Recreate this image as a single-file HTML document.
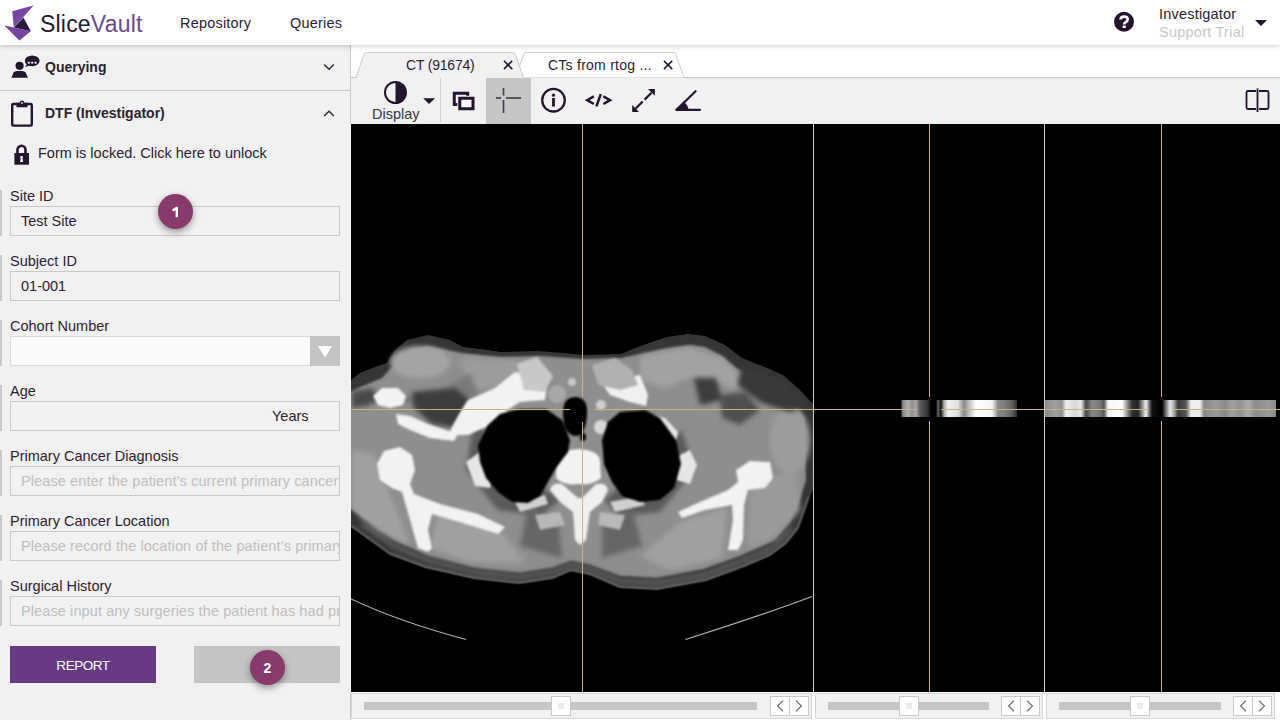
<!DOCTYPE html>
<html><head><meta charset="utf-8">
<style>
*{box-sizing:border-box;margin:0;padding:0}
html,body{width:1280px;height:720px;overflow:hidden;background:#fff;font-family:"Liberation Sans",sans-serif;color:#2b2233}
.a{position:absolute}
#hdr{left:0;top:0;width:1280px;height:45px;background:#fff;z-index:5;box-shadow:0 1px 5px rgba(0,0,0,.22)}
#side{left:0;top:45px;width:351px;height:675px;background:#f1f1f1}
.lbl{font-size:14.5px;color:#2b2233;left:10px;white-space:nowrap}
.inp{left:10px;width:330px;height:30px;border:1px solid #c9c9c9;background:#f1f1f1}
.gbar{left:0;width:2px;background:#c9c9c9}
.ph{font-size:14.5px;letter-spacing:0.1px;color:#bfbfbf;white-space:nowrap;overflow:hidden}
.badge{width:35px;height:35px;border-radius:50%;background:#883b6b;color:#fff;font-weight:bold;font-size:14px;text-align:center;line-height:37px;box-shadow:0 3px 7px rgba(0,0,0,.38)}
#viewer{left:351px;top:124px;width:929px;height:568px;background:#000;overflow:hidden}
</style></head><body>

<!-- HEADER -->
<div id="hdr" class="a">
  <svg class="a" style="left:0;top:0" width="40" height="45" viewBox="0 0 40 45">
    <polygon points="12.2,11.2 33.8,5.3 23.4,17 13.8,27.3" fill="#7a48a0"/>
    <polygon points="23.4,17.5 30.8,31.2 13.8,27.4" fill="#2c1a3c"/>
    <polygon points="4.4,25.6 13.8,27.4 30.8,31.2 19.4,40.6" fill="#7543a0"/>
  </svg>
  <div class="a" style="left:40px;top:11px;font-size:23px;letter-spacing:0.2px;white-space:nowrap"><span style="color:#241a2e">Slice</span><span style="color:#6a4a8a">Vault</span></div>
  <div class="a" style="left:180px;top:15px;font-size:14.5px;letter-spacing:0.2px;color:#2b2233">Repository</div>
  <div class="a" style="left:290px;top:15px;font-size:14.5px;letter-spacing:0.2px;color:#2b2233">Queries</div>
  <svg class="a" style="left:1100px;top:0px" width="40" height="45" viewBox="1100 0 40 45">
    <circle cx="1124" cy="21.8" r="10" fill="#22152e"/>
    <path d="M1120.6,19.6 Q1120.6,16.6 1124.2,16.6 Q1127.6,16.6 1127.6,19.4 Q1127.6,21.2 1125.6,22.2 Q1124.2,23 1124.2,24.6" fill="none" stroke="#fff" stroke-width="2.7"/>
    <rect x="1122.6" y="25.6" width="3.2" height="2.4" fill="#fff"/>
  </svg>
  <div class="a" style="left:1159px;top:6px;font-size:14.5px;letter-spacing:0.2px;color:#2b2233;white-space:nowrap">Investigator</div>
  <div class="a" style="left:1159px;top:24px;font-size:14.5px;letter-spacing:0.25px;color:#c8c8c8;white-space:nowrap">Support Trial</div>
  <svg class="a" style="left:1255px;top:20px" width="12" height="7" viewBox="0 0 12 7"><polygon points="0,0 12,0 6,6" fill="#22152e"/></svg>
</div>

<!-- SIDEBAR -->
<div id="side" class="a"></div>
<div class="a" style="left:350px;top:45px;width:1px;height:79px;background:#c9c9c9"></div>
<div class="a" style="left:350px;top:124px;width:1px;height:568px;background:#f4f4f4"></div>
<div class="a" style="left:350px;top:692px;width:1px;height:28px;background:#c9c9c9"></div>
<div class="a" style="left:0;top:90px;width:350px;height:1px;background:#c9c9c9"></div>
<!-- querying icon -->
<svg class="a" style="left:10px;top:54px" width="32" height="26" viewBox="0 0 32 26">
  <circle cx="9.6" cy="11.8" r="4.1" fill="#22152e"/>
  <path d="M1.4,23.8 L3.6,18.6 Q4.6,17 7,17 H12.2 Q14.6,17 15.6,18.6 L18,23.8 Z" fill="#22152e"/>
  <ellipse cx="22.2" cy="6.8" rx="7.4" ry="5.4" fill="#22152e"/>
  <polygon points="17,9.5 15.2,13 20.5,11.2" fill="#22152e"/>
  <rect x="17.8" y="7.8" width="2" height="1.8" fill="#fff"/><rect x="21.2" y="7.8" width="2" height="1.8" fill="#fff"/><rect x="24.6" y="7.8" width="2" height="1.8" fill="#fff"/>
</svg>
<div class="a" style="left:45px;top:59px;font-size:14px;font-weight:bold;color:#2b2233">Querying</div>
<svg class="a" style="left:320px;top:60px" width="18" height="12" viewBox="320 60 18 12"><polyline points="324.2,64.4 329.05,69.2 333.9,64.4" fill="none" stroke="#2e2638" stroke-width="1.4"/></svg>
<!-- clipboard icon -->
<svg class="a" style="left:10px;top:99px" width="24" height="29" viewBox="0 0 24 29">
  <rect x="2.2" y="5" width="19.6" height="21.6" rx="1.2" fill="none" stroke="#22152e" stroke-width="2.4"/>
  <path d="M6.5,3.8 H9.8 A2.2,2.2 0 0 1 14.2,3.8 H17.5 V8.2 H6.5 Z" fill="#22152e"/>
  <circle cx="12" cy="4" r="0.9" fill="#f1f1f1"/>
</svg>
<div class="a" style="left:45px;top:105px;font-size:14px;font-weight:bold;color:#2b2233;white-space:nowrap">DTF (Investigator)</div>
<svg class="a" style="left:320px;top:106px" width="18" height="12" viewBox="320 106 18 12"><polyline points="324.2,116 329.05,111.2 333.9,116" fill="none" stroke="#2e2638" stroke-width="1.4"/></svg>
<!-- lock -->
<svg class="a" style="left:13px;top:144px" width="17" height="22" viewBox="0 0 17 22">
  <path d="M4.5,10 V5.8 A4,4 0 0 1 12.5,5.8 V10" fill="none" stroke="#22152e" stroke-width="2.6"/>
  <rect x="1.4" y="9" width="14.6" height="11.7" fill="#22152e"/>
  <circle cx="8.6" cy="13.3" r="1.4" fill="#fff"/><polygon points="7.9,13.6 9.3,13.6 10.1,18 7.1,18" fill="#fff"/>
</svg>
<div class="a" style="left:38px;top:145px;font-size:14.5px;color:#2b2233;white-space:nowrap">Form is locked. Click here to unlock</div>
<div class="a gbar" style="top:190px;height:46px"></div>
<div class="a lbl" style="top:188px">Site ID</div>
<div class="a inp" style="top:206px"></div>
<div class="a" style="left:21px;top:213px;font-size:14.5px;color:#2b2233;white-space:nowrap">Test Site</div>
<div class="a gbar" style="top:255px;height:46px"></div>
<div class="a lbl" style="top:253px">Subject ID</div>
<div class="a inp" style="top:271px"></div>
<div class="a" style="left:21px;top:278px;font-size:14.5px;color:#2b2233;white-space:nowrap">01-001</div>
<div class="a gbar" style="top:320px;height:46px"></div>
<div class="a lbl" style="top:318px">Cohort Number</div>
<div class="a inp" style="top:336px;background:#fafafa;border-color:#dadada"></div>
<div class="a" style="left:310px;top:336px;width:30px;height:30px;background:#c4c4c4"></div>
<svg class="a" style="left:318px;top:346px" width="14" height="12" viewBox="0 0 14 12"><polygon points="0,0 14,0 7,11.7" fill="#fff"/></svg>
<div class="a gbar" style="top:385px;height:46px"></div>
<div class="a lbl" style="top:383px">Age</div>
<div class="a inp" style="top:401px"></div>
<div class="a" style="left:272px;top:408px;font-size:14.5px;color:#2b2233;white-space:nowrap">Years</div>
<div class="a gbar" style="top:450px;height:46px"></div>
<div class="a lbl" style="top:448px">Primary Cancer Diagnosis</div>
<div class="a inp" style="top:466px"></div>
<div class="a ph" style="left:21px;top:473px;width:318px">Please enter the patient’s current primary cancer diagnosis</div>
<div class="a gbar" style="top:515px;height:46px"></div>
<div class="a lbl" style="top:513px">Primary Cancer Location</div>
<div class="a inp" style="top:531px"></div>
<div class="a ph" style="left:21px;top:538px;width:318px">Please record the location of the patient’s primary cancer</div>
<div class="a gbar" style="top:580px;height:46px"></div>
<div class="a lbl" style="top:578px">Surgical History</div>
<div class="a inp" style="top:596px"></div>
<div class="a ph" style="left:21px;top:603px;width:318px">Please input any surgeries the patient has had prior</div>
<div class="a" style="left:10px;top:646px;width:146px;height:37px;background:#673a83;color:#fff;font-size:13.5px;letter-spacing:-0.45px;text-align:center;line-height:39px">REPORT</div>
<div class="a" style="left:194px;top:646px;width:146px;height:37px;background:#c4c4c4"></div>
<div class="a badge" style="left:158px;top:194px"><svg width="35" height="35" viewBox="0 0 35 35" style="position:absolute;left:0;top:0"><path d="M14,15.4 L18.4,12.8 H20 V23.2 H17.6 V16.2 L15,17.6 Z" fill="#fff"/></svg></div>
<div class="a badge" style="left:250px;top:650px">2</div>


<!-- TABS + TOOLBAR -->
<div class="a" style="left:351px;top:45px;width:929px;height:79px;background:#fff"></div>
<div class="a" style="left:351px;top:77px;width:929px;height:1px;background:#c9c9c9"></div>
<div class="a" style="left:351px;top:78px;width:929px;height:46px;background:#f1f1f1"></div>
<svg class="a" style="left:351px;top:45px" width="929" height="34" viewBox="351 45 929 34">
  <path d="M515.5,77.5 L523.8,54 Q524.4,52.5 526,52.5 L673.5,52.5 Q675,52.5 675.6,54 L684,77.5" fill="#fff" stroke="#cfcfcf" stroke-width="1"/>
  <path d="M356,77.5 L364.2,54 Q364.8,52.5 366.5,52.5 L513,52.5 Q514.6,52.5 515.2,54 L523.5,77.5" fill="#f1f1f1" stroke="#cfcfcf" stroke-width="1"/>
  <rect x="357" y="77" width="166" height="2" fill="#f1f1f1"/>
  <g stroke="#22152e" stroke-width="1.6" stroke-linecap="round">
    <line x1="504.4" y1="61.2" x2="511.8" y2="68.6"/><line x1="511.8" y1="61.2" x2="504.4" y2="68.6"/>
    <line x1="664.4" y1="61.2" x2="671.8" y2="68.6"/><line x1="671.8" y1="61.2" x2="664.4" y2="68.6"/>
  </g>
</svg>
<div class="a" style="left:406px;top:57px;font-size:14px;letter-spacing:-0.2px;color:#2b2233;white-space:nowrap">CT (91674)</div>
<div class="a" style="left:548px;top:57px;font-size:14px;letter-spacing:0.25px;color:#2b2233;white-space:nowrap">CTs from rtog ...</div>
<!-- toolbar -->
<div class="a" style="left:440px;top:78px;width:1px;height:44px;background:#d0d0d0"></div>
<div class="a" style="left:486px;top:78px;width:45px;height:46px;background:#c6c6c6"></div>
<svg class="a" style="left:351px;top:78px" width="929" height="46" viewBox="351 78 929 46">
  <g fill="none" stroke="#22152e">
    <circle cx="395.5" cy="92.5" r="10.5" stroke-width="2"/>
  </g>
  <path d="M395.5,82 A10.5,10.5 0 0 1 395.5,103 Z" fill="#22152e"/>
  <polygon points="423.2,98.2 435,98.2 429.1,104" fill="#22152e"/>
  <!-- copy icon -->
  <rect x="454.25" y="93.25" width="13.5" height="11.25" fill="none" stroke="#22152e" stroke-width="3"/>
  <rect x="457.25" y="95.75" width="18.5" height="15.5" fill="#f1f1f1"/>
  <rect x="459.75" y="98.25" width="13.25" height="10.5" fill="#f7f7f7" stroke="#22152e" stroke-width="3"/>
  <!-- crosshair -->
  <g stroke="#45404c" stroke-width="1.7">
    <line x1="503.5" y1="88" x2="503.5" y2="95.5"/>
    <line x1="503.5" y1="100" x2="503.5" y2="113"/>
    <line x1="496" y1="98" x2="501" y2="98"/>
    <line x1="506" y1="98" x2="521" y2="98"/>
  </g>
  <!-- info -->
  <circle cx="553.5" cy="100.2" r="11.3" fill="none" stroke="#22152e" stroke-width="2.3"/>
  <rect x="552.1" y="98" width="2.8" height="8.6" fill="#22152e"/>
  <circle cx="553.5" cy="95.2" r="1.6" fill="#22152e"/>
  <!-- code -->
  <g fill="none" stroke="#22152e" stroke-width="2.5" stroke-linecap="butt" stroke-linejoin="miter">
    <polyline points="593.8,96.4 587.2,100.2 593.8,104"/>
    <line x1="600.8" y1="94.2" x2="596.4" y2="106.4"/>
    <polyline points="603.4,96.4 610,100.2 603.4,104"/>
  </g>
  <!-- expand -->
  <g stroke="#22152e" stroke-width="2.2" fill="none">
    <line x1="644.6" y1="99.6" x2="651.5" y2="92.7"/>
    <line x1="642.6" y1="101.6" x2="635.5" y2="108.7"/>
  </g>
  <polygon points="648,89.1 654.9,89.1 654.9,95.8" fill="#22152e"/>
  <polygon points="632.2,105.1 632.2,112 638.9,112" fill="#22152e"/>
  <!-- angle -->
  <g stroke="#22152e" stroke-width="2.2" fill="none" stroke-linecap="round">
    <line x1="676.5" y1="109.8" x2="695.6" y2="91.2"/>
    <line x1="676.5" y1="109.8" x2="700" y2="109.8"/>
  </g>
  <path d="M676,111 L684.6,102.6 A11.5,11.5 0 0 1 688.6,111 Z" fill="#22152e"/>
  <!-- split -->
  <g fill="none" stroke="#22152e" stroke-width="1.8">
    <path d="M1256,91 H1248 Q1246.5,91 1246.5,92.5 V107.5 Q1246.5,109 1248,109 H1256"/>
    <path d="M1259,91 H1267 Q1268.5,91 1268.5,92.5 V107.5 Q1268.5,109 1267,109 H1259"/>
    <line x1="1257.5" y1="88.5" x2="1257.5" y2="112"/>
  </g>
</svg>
<div class="a" style="left:372px;top:106px;font-size:14.5px;color:#3a3340;white-space:nowrap">Display</div>

<!-- VIEWER -->
<div id="viewer" class="a">
<svg width="929" height="568" viewBox="351 124 929 568" style="position:absolute;left:0;top:0">
  <defs>
    <filter id="b0" x="-10%" y="-10%" width="120%" height="120%"><feGaussianBlur stdDeviation="0.7"/></filter>
    <filter id="b1" x="-10%" y="-10%" width="120%" height="120%"><feGaussianBlur stdDeviation="1.2"/></filter>
    <filter id="b2" x="-10%" y="-10%" width="120%" height="120%"><feGaussianBlur stdDeviation="2.5"/></filter>
    <clipPath id="p1"><rect x="351" y="124" width="462" height="568"/></clipPath>
  </defs>
  <g clip-path="url(#p1)">
    <!-- body outer (dark rim) -->
    <path filter="url(#b0)" fill="#363636" d="M340,382 L351,380 L360,373 L375,367 L387,363 L395,350 L407,340 L428,335 L450,340 L463,347 L480,349 L501,352 L537,351 L565,353 L582,355 L621,354 L638,347 L652,342 L667,337 L688,334 L705,336 L725,345 L742,358 L767,368 L783,375 L800,390 L812,403 L818,405 L818,480 L809,498 L798,529 L786,544 L770,556 L744,567 L706,581 L657,590 L620,588 L590,575 L571,571 L552,579 L519,584 L474,579 L425,568 L390,555 L351,527 L340,519 Z"/>
    <!-- body inner (muscle) -->
    <path filter="url(#b1)" fill="#8e8e8e" d="M340,398 L358,388 L382,378 L396,362 L410,350 L428,346 L448,350 L462,353 L500,357 L540,356 L582,359 L621,358 L640,354 L667,348 L690,345 L705,347 L722,356 L736,368 L758,378 L775,386 L792,402 L804,418 L806,480 L800,500 L790,522 L776,540 L740,556 L704,569 L657,578 L620,576 L590,565 L571,561 L552,568 L519,573 L474,568 L428,556 L395,541 L360,515 L340,502 Z"/>
    <!-- light muscles -->
    <g filter="url(#b2)">
      <ellipse cx="420" cy="362" rx="30" ry="16" fill="#a4a4a4"/>
      <path d="M640,356 L690,348 L722,358 L740,375 L735,390 L712,380 L690,378 L665,388 L640,380 Z" fill="#a2a2a2"/>
      <ellipse cx="790" cy="440" rx="20" ry="34" fill="#9c9c9c"/>
      <path d="M438,512 L500,530 L525,562 L470,562 L430,548 Z" fill="#a0a0a0"/>
      <path d="M680,522 L726,508 L722,558 L670,570 L640,556 Z" fill="#a0a0a0"/>
      <path d="M750,485 L795,470 L800,510 L775,538 L748,548 Z" fill="#9a9a9a"/>
      <path d="M352,450 L375,455 L392,500 L410,545 L375,532 L352,508 Z" fill="#a0a0a0"/>
      <path d="M460,358 L540,362 L530,385 L470,390 Z" fill="#9c9c9c"/>
      <path d="M395,398 L440,392 L470,372 L480,400 L455,420 Z" fill="#7a7a7a"/>
    </g>
    <!-- dark fat zones -->
    <g filter="url(#b2)" fill="#3e3e3e">
      <path d="M412,392 L455,388 L470,400 L458,428 L432,424 L414,408 Z"/>
      <path d="M694,378 L716,378 L722,400 L700,405 Z"/>
      <path d="M742,365 L785,382 L806,405 L790,412 L760,402 L738,385 Z" fill="#383838"/>
      <path d="M352,392 L372,388 L380,400 L366,406 L352,408 Z" fill="#4a4a4a"/>
      <path d="M474,420 L466,470 L498,510 L540,516 L560,500 L520,470 Z" fill="#5a5a5a"/>
      <path d="M682,430 L694,470 L660,512 L620,516 L604,500 L640,470 Z" fill="#5a5a5a"/>
      <path d="M528,505 L558,520 L562,558 L520,546 Z" fill="#666"/>
      <path d="M602,520 L632,506 L642,546 L602,558 Z" fill="#666"/>
      <path d="M720,395 L745,392 L760,410 L740,425 L722,418 Z" fill="#505050"/>
    </g>
    <!-- skin line -->
    <path filter="url(#b1)" fill="none" stroke="#7a7a7a" stroke-width="1.4" d="M351,525.5 L390,553.5 L425,566.5 L474,577.5 L519,582.5 L552,577.5 L571,569.5 L590,573.5 L620,586.5 L657,588.5 L706,579.5 L744,565.5 L770,554.5 L786,542.5 L798,527.5 L809,496.5"/>
    <!-- bottom darker band -->
    <path filter="url(#b2)" fill="none" stroke="#5a5a5a" stroke-width="6" d="M362,523 L395,546 L428,560 L474,572 L519,577 L552,572 L571,565 L590,569 L620,581 L657,583 L704,575 L744,560 L772,548 L792,528"/>
    <!-- bones -->
    <g filter="url(#b1)" fill="#f2f2f2">
      <!-- left acromion/clavicle lateral -->
      <path d="M373,396 L382,388 L398,388 L406,396 L403,405 L390,408 L378,405 Z"/>
      <path d="M396,414 L410,416 L428,424 L446,430 L458,434 L454,441 L430,438 L410,430 L398,424 Z"/>
      <!-- left clavicle medial (V up to sternum) -->
      <path d="M448,435 L454,423 L462,409 L468,400 L495,388 L515,372 L548,378 L545,400 L520,402 L509,409 L495,423 L468,435 Z"/>
      <path d="M517,364 L537,357 L553,376 L545,392 L524,390 Z" fill="#c8c8c8"/>
      <!-- left scapula -->
      <path d="M377,464 L384,451 L400,447 L412,455 L415,470 L410,484 L414,494 L440,504 L478,514 L505,527 L498,534 L466,524 L432,514 L428,530 L432,548 L428,552 L418,548 L410,520 L402,492 L392,488 L380,480 Z"/>
      <!-- rib near lung left -->
      <path d="M466,462 L480,452 L494,470 L490,488 L475,486 Z" fill="#e6e6e6"/>
      <path d="M515,502 L545,495 L548,504 L520,512 Z" fill="#d0d0d0"/>
      <!-- right clavicle -->
      <path d="M603,385 L625,378 L640,375 L648,395 L646,406 L630,402 L610,395 Z" fill="#f0f0f0"/>
      <path d="M592,365 L615,358 L632,370 L638,385 L620,390 L598,385 Z" fill="#b0b0b0"/>
      <path d="M649,415 L665,418 L678,432 L676,440 L660,440 Z" fill="#e8e8e8"/>
      <path d="M676,457 L690,450 L697,465 L690,484 L676,480 Z" fill="#e6e6e6"/>
      <path d="M610,502 L640,496 L645,505 L615,512 Z" fill="#d0d0d0"/>
      <!-- right scapula -->
      <path d="M736,470 L750,461 L770,462 L773,478 L765,488 L748,490 L744,505 L743,540 L738,550 L728,550 L733,520 L732,505 L705,510 L682,518 L678,512 L700,502 L728,490 L738,482 Z"/>
      <!-- vertebral body -->
      <path d="M556,460 Q560,450 578,449 Q598,450 600,460 L601,478 Q592,486 578,484 Q564,486 556,478 Z"/>
      <!-- laminae + spinous -->
      <path d="M550,490 Q552,482 562,484 L578,498 L582,498 L596,484 Q606,482 608,490 L602,502 L590,512 L586,540 L580,545 L575,540 L573,512 L560,502 Z" fill="#efefef"/>
      <path d="M535,515 L560,512 L565,525 L540,530 Z" fill="#b8b8b8"/>
      <path d="M600,512 L625,515 L620,530 L598,525 Z" fill="#b8b8b8"/>
      <circle cx="601" cy="427" r="7" fill="#d8d8d8"/>
      <circle cx="601" cy="405" r="5" fill="#d0d0d0"/>
      <circle cx="557" cy="394" r="9" fill="#a8a8a8"/>
      <circle cx="572" cy="382" r="4" fill="#c8c8c8"/>
    </g>
    <!-- lungs -->
    <g filter="url(#b1)" fill="#000">
      <path d="M478,445 L488,425 L500,414 L520,409 L546,409 L562,420 L570,440 L568,452 L556,468 L548,482 L540,496 L528,503 L512,502 L498,492 L486,478 L480,462 Z"/>
      <path d="M602,440 L608,422 L620,412 L645,410 L660,418 L676,440 L681,464 L674,488 L660,500 L640,502 L622,496 L612,482 L604,464 Z"/>
      <path d="M563,412 Q563,397 576,397 Q588,398 587,414 Q586,436 575,436 Q563,434 563,412 Z"/>
      <ellipse cx="583" cy="437" rx="3" ry="4"/>
    </g>
    <!-- table arcs -->
    <path d="M351,599 Q400,622 466,639.5" fill="none" stroke="#b4b4b4" stroke-width="1.1"/>
    <path d="M685.5,639.5 Q760,616 812,596.5" fill="none" stroke="#b4b4b4" stroke-width="1.1"/>
  </g>
  <!-- strips in panel 2 and 3 -->
  <defs>
    <linearGradient id="s2" gradientUnits="userSpaceOnUse" x1="901" x2="1017" y1="0" y2="0">
      <stop offset="0.0000" stop-color="#222"/>
      <stop offset="0.0172" stop-color="#8a8a8a"/>
      <stop offset="0.0603" stop-color="#b0b0b0"/>
      <stop offset="0.0948" stop-color="#909090"/>
      <stop offset="0.1293" stop-color="#a8a8a8"/>
      <stop offset="0.1638" stop-color="#5a5a5a"/>
      <stop offset="0.2328" stop-color="#303030"/>
      <stop offset="0.2586" stop-color="#000"/>
      <stop offset="0.3017" stop-color="#000"/>
      <stop offset="0.3190" stop-color="#666"/>
      <stop offset="0.3448" stop-color="#111"/>
      <stop offset="0.3707" stop-color="#aaa"/>
      <stop offset="0.4052" stop-color="#f2f2f2"/>
      <stop offset="0.4914" stop-color="#e0e0e0"/>
      <stop offset="0.5431" stop-color="#8a8a8a"/>
      <stop offset="0.5948" stop-color="#c8c8c8"/>
      <stop offset="0.6466" stop-color="#fff"/>
      <stop offset="0.7845" stop-color="#f4f4f4"/>
      <stop offset="0.8362" stop-color="#888"/>
      <stop offset="0.9052" stop-color="#7a7a7a"/>
      <stop offset="0.9569" stop-color="#606060"/>
      <stop offset="1.0000" stop-color="#303030"/>
    </linearGradient>
    <linearGradient id="s3" gradientUnits="userSpaceOnUse" x1="1045" x2="1276" y1="0" y2="0">
      <stop offset="0.0000" stop-color="#8a8a8a"/>
      <stop offset="0.0433" stop-color="#a0a0a0"/>
      <stop offset="0.0736" stop-color="#909090"/>
      <stop offset="0.0909" stop-color="#f0f0f0"/>
      <stop offset="0.1299" stop-color="#d8d8d8"/>
      <stop offset="0.1558" stop-color="#e8e8e8"/>
      <stop offset="0.1775" stop-color="#444"/>
      <stop offset="0.2035" stop-color="#8a8a8a"/>
      <stop offset="0.2381" stop-color="#777"/>
      <stop offset="0.2554" stop-color="#555"/>
      <stop offset="0.2727" stop-color="#f4f4f4"/>
      <stop offset="0.3333" stop-color="#fff"/>
      <stop offset="0.3550" stop-color="#999"/>
      <stop offset="0.3766" stop-color="#333"/>
      <stop offset="0.4026" stop-color="#222"/>
      <stop offset="0.4199" stop-color="#888"/>
      <stop offset="0.4372" stop-color="#f0f0f0"/>
      <stop offset="0.4545" stop-color="#555"/>
      <stop offset="0.4632" stop-color="#111"/>
      <stop offset="0.5065" stop-color="#000"/>
      <stop offset="0.5238" stop-color="#777"/>
      <stop offset="0.5411" stop-color="#e8e8e8"/>
      <stop offset="0.5584" stop-color="#aaa"/>
      <stop offset="0.5758" stop-color="#3a3a3a"/>
      <stop offset="0.6104" stop-color="#555"/>
      <stop offset="0.6320" stop-color="#eee"/>
      <stop offset="0.6710" stop-color="#eee"/>
      <stop offset="0.6883" stop-color="#888"/>
      <stop offset="0.7359" stop-color="#9a9a9a"/>
      <stop offset="0.7792" stop-color="#888"/>
      <stop offset="0.8095" stop-color="#a0a0a0"/>
      <stop offset="0.8442" stop-color="#909090"/>
      <stop offset="0.8788" stop-color="#aaa"/>
      <stop offset="0.9134" stop-color="#8a8a8a"/>
      <stop offset="0.9654" stop-color="#999"/>
      <stop offset="1.0000" stop-color="#8a8a8a"/>
    </linearGradient>
  </defs>
  <rect x="901" y="400" width="116" height="17" fill="url(#s2)"/>
  <rect x="1045" y="400" width="231" height="17" fill="url(#s3)"/>
  <!-- dividers -->
  <rect x="813" y="124" width="1" height="568" fill="#d0d0d0"/>
  <rect x="1044" y="124" width="1" height="568" fill="#d0d0d0"/>
  <!-- crosshairs -->
  <g fill="#cbb47c">
    <rect x="582" y="124" width="1" height="273"/>
    <rect x="582" y="422" width="1" height="270"/>
    <rect x="351" y="409" width="219" height="1"/>
    <rect x="594" y="409" width="219" height="1"/>
    <rect x="929" y="124" width="1" height="273"/>
    <rect x="929" y="421" width="1" height="271"/>
    <rect x="814" y="409" width="103" height="1"/>
    <rect x="941" y="409" width="103" height="1"/>
    <rect x="1161" y="124" width="1" height="273"/>
    <rect x="1161" y="421" width="1" height="271"/>
    <rect x="1045" y="409" width="104" height="1"/>
    <rect x="1173" y="409" width="107" height="1"/>
  </g>
</svg>
</div>
<!-- slider bar -->
<div class="a" style="left:351px;top:692px;width:929px;height:28px;background:#fff"></div>
<div class="a" style="left:351px;top:693px;width:461px;height:26px;background:#f1f1f1;border:1px solid #d6d6d6"></div>
<div class="a" style="left:364px;top:702px;width:393px;height:8px;background:#c6c6c6"></div>
<div class="a" style="left:551px;top:696px;width:20px;height:20px;background:#fff;border:1px solid #c9c9c9"></div>
<div class="a" style="left:558px;top:703px;width:6px;height:6px;background:#ececec"></div>
<div class="a" style="left:770px;top:696px;width:39px;height:20px;background:#fff;border:1px solid #c9c9c9"></div>
<div class="a" style="left:789px;top:696px;width:1px;height:20px;background:#c9c9c9"></div>
<svg class="a" style="left:770px;top:696px" width="39" height="20" viewBox="0 0 39 20"><g fill="none" stroke="#707070" stroke-width="1.2"><polyline points="13,4.8 7.6,10 13,15.2"/><polyline points="26,4.8 31.4,10 26,15.2"/></g></svg>
<div class="a" style="left:815px;top:693px;width:228px;height:26px;background:#f1f1f1;border:1px solid #d6d6d6"></div>
<div class="a" style="left:827.5px;top:702px;width:161.5px;height:8px;background:#c6c6c6"></div>
<div class="a" style="left:899px;top:696px;width:20px;height:20px;background:#fff;border:1px solid #c9c9c9"></div>
<div class="a" style="left:906px;top:703px;width:6px;height:6px;background:#ececec"></div>
<div class="a" style="left:1001px;top:696px;width:39px;height:20px;background:#fff;border:1px solid #c9c9c9"></div>
<div class="a" style="left:1020px;top:696px;width:1px;height:20px;background:#c9c9c9"></div>
<svg class="a" style="left:1001px;top:696px" width="39" height="20" viewBox="0 0 39 20"><g fill="none" stroke="#707070" stroke-width="1.2"><polyline points="13,4.8 7.6,10 13,15.2"/><polyline points="26,4.8 31.4,10 26,15.2"/></g></svg>
<div class="a" style="left:1046px;top:693px;width:229px;height:26px;background:#f1f1f1;border:1px solid #d6d6d6"></div>
<div class="a" style="left:1059px;top:702px;width:162px;height:8px;background:#c6c6c6"></div>
<div class="a" style="left:1130px;top:696px;width:20px;height:20px;background:#fff;border:1px solid #c9c9c9"></div>
<div class="a" style="left:1137px;top:703px;width:6px;height:6px;background:#ececec"></div>
<div class="a" style="left:1233px;top:696px;width:39px;height:20px;background:#fff;border:1px solid #c9c9c9"></div>
<div class="a" style="left:1252px;top:696px;width:1px;height:20px;background:#c9c9c9"></div>
<svg class="a" style="left:1233px;top:696px" width="39" height="20" viewBox="0 0 39 20"><g fill="none" stroke="#707070" stroke-width="1.2"><polyline points="13,4.8 7.6,10 13,15.2"/><polyline points="26,4.8 31.4,10 26,15.2"/></g></svg>


</body></html>
